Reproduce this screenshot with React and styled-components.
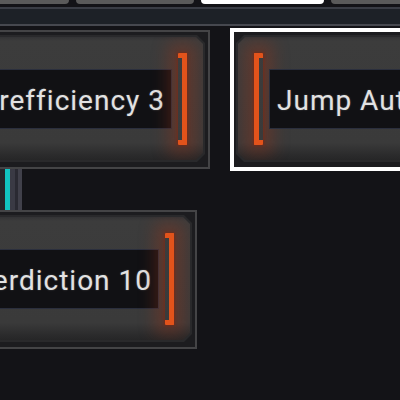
import styled, { createGlobalStyle, css } from "styled-components";

const GlobalStyle = createGlobalStyle`
  html, body {
    margin: 0;
    padding: 0;
    background: #131317;
    overflow: hidden;
  }
  body {
    width: 400px;
    height: 400px;
    font-family: Roboto, "Liberation Sans", sans-serif;
  }
`;

const Screen = styled.div`
  width: 400px;
  height: 400px;
  overflow: hidden;
  display: flex;
  flex-direction: column;
`;

const Tabs = styled.div`
  display: flex;
  gap: 7px;
  margin-left: -60px;
  height: 4px;
`;

const Tab = styled.div`
  flex: none;
  width: ${(p) => p.$w}px;
  height: 4px;
  background: ${(p) => (p.$active ? "#ffffff" : "#5a5a5a")};
  border-radius: 0 0 4px 4px;
`;

const Bar = styled.div`
  margin-top: 3px;
  height: 15px;
  background: #1d2127;
  border-top: 2px solid #3a3d45;
  border-bottom: 2px solid #46484f;
`;

const Tree = styled.div`
  display: flex;
  gap: 22px;
  margin-top: 4px;
  margin-left: -90px;
`;

const Column = styled.div`
  display: flex;
  flex-direction: column;
  align-items: flex-start;
  flex: none;
  width: ${(p) => p.$w}px;
`;

const Card = styled.div`
  flex: none;
  box-sizing: border-box;
  width: ${(p) => p.$w}px;
  padding: 3px 3px 5px;
  background: #1c1c1f;
  border: 2px solid #444446;
  ${(p) =>
    p.$selected &&
    css`
      border-color: #ffffff;
      box-shadow: 0 0 0 2px #ffffff;
      padding: 3px 3px 5px 2px;
    `}
`;

const chamfer = (c) => `polygon(
  ${c}px 0, calc(100% - ${c}px) 0, 100% ${c}px,
  100% calc(100% - ${c}px), calc(100% - ${c}px) 100%,
  ${c}px 100%, 0 calc(100% - ${c}px), 0 ${c}px
)`;

const Panel = styled.div`
  height: 127px;
  box-sizing: border-box;
  padding: 2px;
  background: #29292b;
  clip-path: ${chamfer(8)};
`;

const Face = styled.div`
  height: 100%;
  box-sizing: border-box;
  display: flex;
  align-items: center;
  flex-direction: ${(p) => (p.$left ? "row" : "row-reverse")};
  gap: 6px;
  padding: 0 16px;
  background: linear-gradient(
    to bottom,
    #333335 0,
    #3c3c3c 4px,
    #3a3a3a 86%,
    #2b2b2c 96%,
    #262627 100%
  );
  clip-path: ${chamfer(7)};
`;

const Bracket = styled.div`
  flex: none;
  width: 9px;
  height: 92px;
  box-sizing: border-box;
  border: 5px solid #e2531b;
  ${(p) => (p.$left ? "border-right: none;" : "border-left: none;")}
  border-radius: 1px;
  box-shadow: 0 0 16px 10px rgba(160, 52, 24, 0.34),
    0 0 3px 1px rgba(120, 30, 10, 0.6);
`;

const NameBox = styled.div`
  flex: 1;
  min-width: 0;
  height: 60px;
  box-sizing: border-box;
  display: flex;
  align-items: center;
  justify-content: ${(p) => (p.$left ? "flex-start" : "flex-end")};
  padding: 4px 6px 0 7px;
  background: #111114;
  border: 1px solid #2b2f3d;
  overflow: hidden;
  white-space: nowrap;
  color: #e2e2e2;
  font-size: 28px;
  letter-spacing: 1px;
  line-height: 1;
  text-shadow: 0 0 2px rgba(255, 255, 255, 0.25);
`;

const Link = styled.div`
  display: flex;
  height: 41px;
  margin-left: ${(p) => p.$offset}px;
`;

const Lane = styled.div`
  width: ${(p) => p.$w}px;
  background: ${(p) => p.$c};
`;

function Skill({ name, width, selected, left }) {
  return (
    <Card $w={width} $selected={selected}>
      <Panel>
        <Face $left={left}>
          <Bracket $left={left} />
          <NameBox $left={left}>{name}</NameBox>
        </Face>
      </Panel>
    </Card>
  );
}

export default function App() {
  return (
    <Screen>
      <GlobalStyle />
      <Tabs>
        <Tab $w={129} />
        <Tab $w={118} />
        <Tab $w={123} $active />
        <Tab $w={120} />
      </Tabs>
      <Bar />
      <Tree>
        <Column $w={300}>
          <Skill name="Warp Core Powerefficiency 3" width={300} />
          <Link $offset={90}>
            <Lane $w={5} $c="#25252c" />
            <Lane $w={5} $c="#12c3c3" />
            <Lane $w={5} $c="#3a3a44" />
            <Lane $w={3} $c="#2a2a32" />
            <Lane $w={4} $c="#40404a" />
          </Link>
          <Skill name="Interdiction 10" width={287} />
        </Column>
        <Column $w={300}>
          <Skill name="Jump Autopilot" width={300} selected left />
        </Column>
      </Tree>
    </Screen>
  );
}
